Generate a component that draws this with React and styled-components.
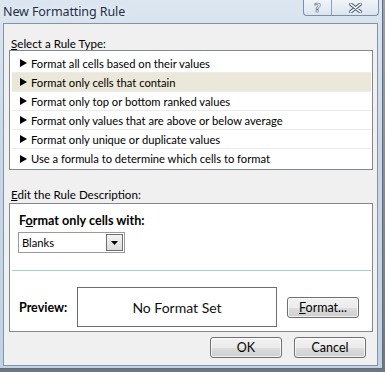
import styled, { createGlobalStyle } from 'styled-components';

const Global = createGlobalStyle`
  html, body { margin:0; padding:0; background:#fff; }
  body { font-family:Lato,"Noto Sans",sans-serif; font-size:11.2px; color:#000; }
`;

const Shadow = styled.div`
  width:385px; height:372px; box-sizing:border-box;
  background:linear-gradient(#9aa3ad,#6e7780);
  padding:0 2px 3px 0;
`;
const Frame = styled.div`
  height:100%; box-sizing:border-box;
  background:linear-gradient(#dce6f0,#c9d7e6 40%,#c3d2e2);
  border-right:1px solid #5d6d80; border-bottom:1px solid #5d6d80;
  padding:0 4px 2px 3px;
  display:flex; flex-direction:column;
`;
const TitleBar = styled.div`
  height:23px; display:flex; align-items:flex-start; justify-content:space-between;
`;
const Title = styled.div`
  font:12.5px "Noto Sans",sans-serif; line-height:23px; color:#1c2f47; letter-spacing:-0.1px;
  text-shadow:0 0 6px rgba(255,255,255,0.9);
`;
const Caps = styled.div`
  display:flex; height:15px; margin-right:-1px;
  border:1px solid #7c8ea4; border-top:none; border-radius:0 0 4px 4px;
  background:linear-gradient(rgba(255,255,255,0.55),rgba(220,230,240,0.4));
  overflow:hidden;
`;
const Cap = styled.div`
  width:${p=>p.$w}px; display:flex; align-items:center; justify-content:center;
  border-left:${p=>p.$first ? 'none' : '1px solid #8fa0b4'};
  font:bold 12px "DejaVu Sans",sans-serif; color:#fff;
  -webkit-text-stroke:0.6px #5b6a7c;
`;
const Client = styled.div`
  flex:1; background:#f0f0f0; border:1px solid #8294aa;
  padding:0 4px 0 5px; display:flex; flex-direction:column;
`;
const Label = styled.div`
  line-height:13px; height:13px; margin-top:${p=>p.$mt}px; margin-left:2px;
  font-size:11.6px; white-space:nowrap;
`;
const ListBox = styled.div`
  height:120px; box-sizing:border-box;
  background:#fff; border:1px solid #828790; padding:3px 1px 1px 2px;
`;
const Row = styled.div`
  height:19px; box-sizing:border-box; display:flex; align-items:center;
  padding-left:8px; white-space:nowrap;
  border-bottom:${p=>p.$last ? 'none' : '1px solid #ebebeb'};
  background:${p=>p.$sel ? '#ebe8d9' : 'transparent'};
`;
const Arrow = styled.span`
  display:flex; align-items:center; width:11px; height:9px;
`;
const DescBox = styled.div`
  height:129px; box-sizing:border-box; margin-top:2px;
  background:#fff; border:1px solid #828790; display:flex; flex-direction:column;
`;
const Heading = styled.div`
  font-weight:bold; line-height:13px; margin:10px 0 0 9px; font-size:12.6px;
`;
const Combo = styled.div`
  width:107px; height:21px; box-sizing:border-box; margin:5px 0 0 8px;
  border:1px solid #9a9a9a; display:flex; align-items:center; justify-content:space-between;
  padding:0 1px 0 3px; background:#fff;
`;
const ComboBtn = styled.div`
  width:17px; height:17px; box-sizing:border-box;
  border:1px solid #6f6f6f; background:linear-gradient(#f4f4f4,#dcdcdc);
  display:flex; align-items:center; justify-content:center;
`;
const Divider = styled.div`
  height:1px; background:#9fcbef; margin:17px 1px 0 2px;
`;
const PreviewRow = styled.div`
  display:flex; align-items:center; margin:16px 0 0 9px;
`;
const PreviewLabel = styled.div`
  font-weight:bold; width:58px; font-size:12.5px;
`;
const PreviewBox = styled.div`
  width:200px; height:40px; box-sizing:border-box; border:1px solid #6d6d6d;
  display:flex; align-items:center; justify-content:center; font-size:14px; color:#111;
`;
const Button = styled.button`
  width:${p=>p.$w || 72}px; height:21px; box-sizing:border-box; padding:0;
  font:12.5px Lato,"Noto Sans",sans-serif; color:#000;
  border:1px solid #707070; border-radius:3px;
  background:linear-gradient(#f2f2f2 0%,#ebebeb 50%,#dddddd 51%,#cfcfcf 100%);
  box-shadow:inset 0 0 0 1px rgba(255,255,255,0.7);
  margin-left:${p=>p.$ml || 0}px;
`;
const Footer = styled.div`
  display:flex; justify-content:flex-end; gap:12px; margin-top:5px; padding-right:7px;
`;

const rules = [
  'Format all cells based on their values',
  'Format only cells that contain',
  'Format only top or bottom ranked values',
  'Format only values that are above or below average',
  'Format only unique or duplicate values',
  'Use a formula to determine which cells to format',
];

export default function App() {
  return (
    <Shadow>
      <Global />
      <Frame>
        <TitleBar>
          <Title>New Formatting Rule</Title>
          <Caps>
            <Cap $w={27} $first>?</Cap>
            <Cap $w={46}>
              <svg width="13" height="10" viewBox="0 0 13 10">
                <path d="M1.5 1 L11.5 9 M11.5 1 L1.5 9" stroke="#5b6a7c" strokeWidth="3.6" strokeLinecap="round" />
                <path d="M1.5 1 L11.5 9 M11.5 1 L1.5 9" stroke="#fff" strokeWidth="1.6" strokeLinecap="round" />
              </svg>
            </Cap>
          </Caps>
        </TitleBar>
        <Client>
          <Label $mt={13}><u>S</u>elect a Rule Type:</Label>
          <ListBox>
            {rules.map((r, i) => (
              <Row key={r} $sel={i === 1} $last={i === rules.length - 1}>
                <Arrow>
                  <svg width="7" height="8" viewBox="0 0 7 8"><path d="M0 0 L7 4 L0 8 Z" fill="#000" /></svg>
                </Arrow>
                {r}
              </Row>
            ))}
          </ListBox>
          <Label $mt={18}><u>E</u>dit the Rule Description:</Label>
          <DescBox>
            <Heading>F<u>o</u>rmat only cells with:</Heading>
            <Combo>
              <span>Blanks</span>
              <ComboBtn>
                <svg width="7" height="4" viewBox="0 0 7 4"><path d="M0 0 H7 L3.5 4 Z" fill="#000" /></svg>
              </ComboBtn>
            </Combo>
            <Divider />
            <PreviewRow>
              <PreviewLabel>Preview:</PreviewLabel>
              <PreviewBox>No Format Set</PreviewBox>
              <Button $ml={10}><u>F</u>ormat...</Button>
            </PreviewRow>
          </DescBox>
          <Footer>
            <Button>OK</Button>
            <Button>Cancel</Button>
          </Footer>
        </Client>
      </Frame>
    </Shadow>
  );
}
